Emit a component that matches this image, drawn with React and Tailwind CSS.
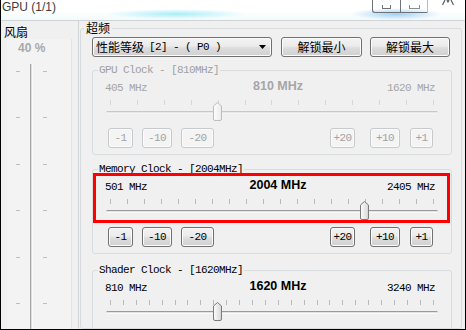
import React from 'react'

const MONO = "[font-family:'Liberation_Mono',monospace] text-[11px] tracking-[-0.6px]"
const CJK = "[font-family:'Noto_Sans_CJK_SC',sans-serif] text-[12px]"

const GROUPS = [
  { name: 'GPU Clock', cur: 810, min: 405, max: 1620, ticks: 13, disabled: true, mt: 'mt-[7px]', buttons: true },
  { name: 'Memory Clock', cur: 2004, min: 501, max: 2405, ticks: 20, disabled: false, mt: 'mt-[8px]', buttons: true, marked: true },
  // the shader group runs past the bottom edge, its step buttons are out of view
  { name: 'Shader Clock', cur: 1620, min: 810, max: 3240, ticks: 26, disabled: false, mt: 'mt-[10px]', buttons: false },
]

function WinButton({ children, disabled, className = '' }) {
  return (
    <div
      className={`flex h-[20px] items-center justify-center rounded-[3px] border ${
        disabled
          ? 'border-[#c6cacc] bg-[#f4f4f4] text-[#a3a3a3] shadow-[inset_0_0_0_1px_#fbfbfb]'
          : 'border-[#707070] bg-[linear-gradient(#f3f3f3_0%,#ebebeb_45%,#dddddd_55%,#d0d0d0_100%)] text-black shadow-[inset_0_0_0_1px_#fcfcfc]'
      } ${className}`}
    >
      {children}
    </div>
  )
}

function Thumb({ disabled }) {
  return (
    <svg width="9" height="19" viewBox="0 0 9 19">
      <defs>
        <linearGradient id={disabled ? 'thd' : 'the'} x1="0" y1="0" x2="1" y2="0">
          <stop offset="0" stopColor="#fdfdfd" />
          <stop offset="1" stopColor={disabled ? '#ececec' : '#d6d6d6'} />
        </linearGradient>
      </defs>
      <path
        d="M0.5 4 L4.5 0.5 L8.5 4 V17 Q8.5 18.5 7 18.5 H2 Q0.5 18.5 0.5 17 Z"
        fill={`url(#${disabled ? 'thd' : 'the'})`}
        stroke={disabled ? '#bdbdbd' : '#7a7a7a'}
      />
    </svg>
  )
}

function ClockGroup({ g }) {
  const frac = (g.cur - g.min) / (g.max - g.min)
  const dim = g.disabled
  return (
    <div className={`relative ml-[11px] w-[360px] ${g.mt}`}>
      <fieldset className="rounded-[3px] border border-[#d9dcde] pb-[6px]">
        <legend className={`ml-[5px] px-[1px] leading-[12px] ${MONO} ${dim ? 'text-[#a0a0a0]' : 'text-black'}`}>
          {g.name} - [{g.cur}MHz]
        </legend>

        {/* values */}
        <div className={`mt-[5px] flex h-[14px] items-center pl-[12px] pr-[16px] leading-[14px] ${dim ? 'text-[#a6a6a6]' : 'text-black'}`}>
          <span className={`w-[116px] ${MONO}`}>{g.min} MHz</span>
          <span className="mb-[4px] w-[114px] text-center text-[12.5px] font-bold [font-family:'Liberation_Sans',Arial,sans-serif]">
            {g.cur} MHz
          </span>
          <span className={`flex-1 text-right ${MONO}`}>{g.max} MHz</span>
        </div>

        {/* ticks */}
        <div className="mx-[17px] mt-[5px] flex h-[5px] justify-between">
          {Array.from({ length: g.ticks }).map((_, i) => (
            <div key={i} className={`h-full w-px ${dim ? 'bg-[#d6d6d6]' : 'bg-[#b8b8b8]'}`} />
          ))}
        </div>

        {/* track */}
        <div className="relative mx-[13px] -mt-[3px] h-[19px]">
          <div
            className={`absolute left-0 right-0 top-[9px] h-[3px] rounded-full border-t border-b ${
              dim ? 'border-t-[#c8c8c8] border-b-[#f4f4f4] bg-[#e8e8e8]' : 'border-t-[#9a9a9a] border-b-[#fafafa] bg-[#e3e3e3]'
            }`}
          />
          <div className="absolute top-0" style={{ left: Math.round(frac * 322) }}>
            <Thumb disabled={dim} />
          </div>
        </div>

        {/* step buttons */}
        {g.buttons && (
          <div className={`mt-[7px] flex pl-[15px] pr-[18px] ${MONO}`}>
            <WinButton disabled={dim} className="w-[25px]">-1</WinButton>
            <WinButton disabled={dim} className="ml-[9px] w-[30px]">-10</WinButton>
            <WinButton disabled={dim} className="ml-[9px] w-[33px]">-20</WinButton>
            <div className="flex-1" />
            <WinButton disabled={dim} className="w-[25px]">+20</WinButton>
            <WinButton disabled={dim} className="ml-[15px] w-[30px]">+10</WinButton>
            <WinButton disabled={dim} className="ml-[10px] w-[23px]">+1</WinButton>
          </div>
        )}
        {!g.buttons && <div className="h-[27px]" />}
      </fieldset>

      {g.marked && (
        <div className="absolute left-[1px] top-[10px] h-[50px] w-[357px] border-[3px] border-[#ff0000]" />
      )}
    </div>
  )
}

function FanColumn() {
  const ticks = [0, 1, 2, 3, 4, 5]
  return (
    <div className="flex w-[78px] flex-col border-r border-[#d2d5d7]">
      <div className={`mt-[4px] h-[14px] pl-[3px] leading-[14px] text-black ${CJK}`}>风扇</div>
      <div className="mx-[6px] flex flex-1 flex-col border-r border-[#e4e4e4] bg-[#f3f3f3]">
        <div className="mt-[2px] pl-[11px] text-[12px] font-bold leading-[14px] text-[#a9a9a9] [font-family:'Liberation_Sans',Arial,sans-serif]">
          40 %
        </div>
        <div className="mt-[9px] flex flex-1">
          <div className="ml-[9px] mt-[7px] flex w-[4px] flex-col gap-[45.4px]">
            {ticks.map(i => <div key={i} className="h-px w-full bg-[#bdbdbd]" />)}
          </div>
          <div className="ml-[10px] w-[3px] border-l border-r border-l-[#a6a6a6] border-r-[#fafafa] bg-[#dedede]" />
          <div className="ml-[10px] mt-[7px] flex w-[4px] flex-col gap-[45.4px]">
            {ticks.map(i => <div key={i} className="h-px w-full bg-[#bdbdbd]" />)}
          </div>
        </div>
      </div>
    </div>
  )
}

export default function App() {
  return (
    <div className="flex h-[330px] w-[466px] flex-col overflow-hidden border-x border-b border-black bg-[#f0f0f0] [font-family:'Liberation_Sans',Arial,sans-serif]">
      {/* title bar */}
      <div className="flex h-[21px] shrink-0 items-start justify-between border-b border-[#cfd3d6] bg-[radial-gradient(ellipse_70px_5px_at_175px_14px,#a7eef6,transparent),radial-gradient(ellipse_45px_6px_at_395px_14px,#9fd0f2,transparent),linear-gradient(#ffffff,#ffffff_55%,#f2fbfd)]">
        <span className="pl-[1px] text-[12px] leading-[14px] text-[#3c3c3c]">GPU (1/1)</span>
        <div className="mr-[-2px] flex h-[13px]">
          <div className="flex w-[28px] items-end justify-center rounded-bl-[3px] border-b border-l border-[#6f7276] pb-[3px]">
            <div className="h-[4px] w-[9px] border-x border-b border-[#6f7276]" />
          </div>
          <div className="flex w-[27px] items-end justify-center border-b border-l border-[#6f7276] pb-[3px]">
            <div className="h-[4px] w-[11px] border-x border-b border-[#8a8d90]" />
          </div>
          <div className="flex w-[40px] items-start justify-center border-l border-[#b9bcbf]">
            <svg width="12" height="6" viewBox="0 0 12 6">
              <path d="M3 0 L0.5 5 M9 0 L11.5 5 M5 0 L6 2 L7 0" stroke="#5a5d60" strokeWidth="1.2" fill="none" />
            </svg>
          </div>
        </div>
      </div>

      {/* body */}
      <div className="flex min-h-0 flex-1">
        <FanColumn />
        <fieldset className="ml-[1px] w-[382px] rounded-[3px] border border-[#d9dcde]">
          <legend className={`ml-[3px] px-[2px] leading-[14px] text-black ${CJK}`}>超频</legend>

          <div className="ml-[11px] mt-[2px] flex h-[20px]">
            <div className="flex w-[180px] items-center justify-between rounded-[3px] border border-[#707070] bg-[linear-gradient(#f3f3f3_0%,#ebebeb_45%,#dddddd_55%,#d0d0d0_100%)] pl-[3px] pr-[5px] shadow-[inset_0_0_0_1px_#fcfcfc]">
              <span className="flex items-center text-black">
                <span className={CJK}>性能等级</span>
                <span className={`${MONO} ml-[5px]`}>[2] - ( P0 )</span>
              </span>
              <svg width="7" height="4" viewBox="0 0 7 4">
                <path d="M0 0 H7 L3.5 4 Z" fill="#000" />
              </svg>
            </div>
            <WinButton className={`ml-[9px] w-[81px] ${CJK}`}>解锁最小</WinButton>
            <WinButton className={`ml-[8px] w-[80px] ${CJK}`}>解锁最大</WinButton>
          </div>

          {GROUPS.map(g => (
            <ClockGroup key={g.name} g={g} />
          ))}
        </fieldset>
      </div>
    </div>
  )
}
